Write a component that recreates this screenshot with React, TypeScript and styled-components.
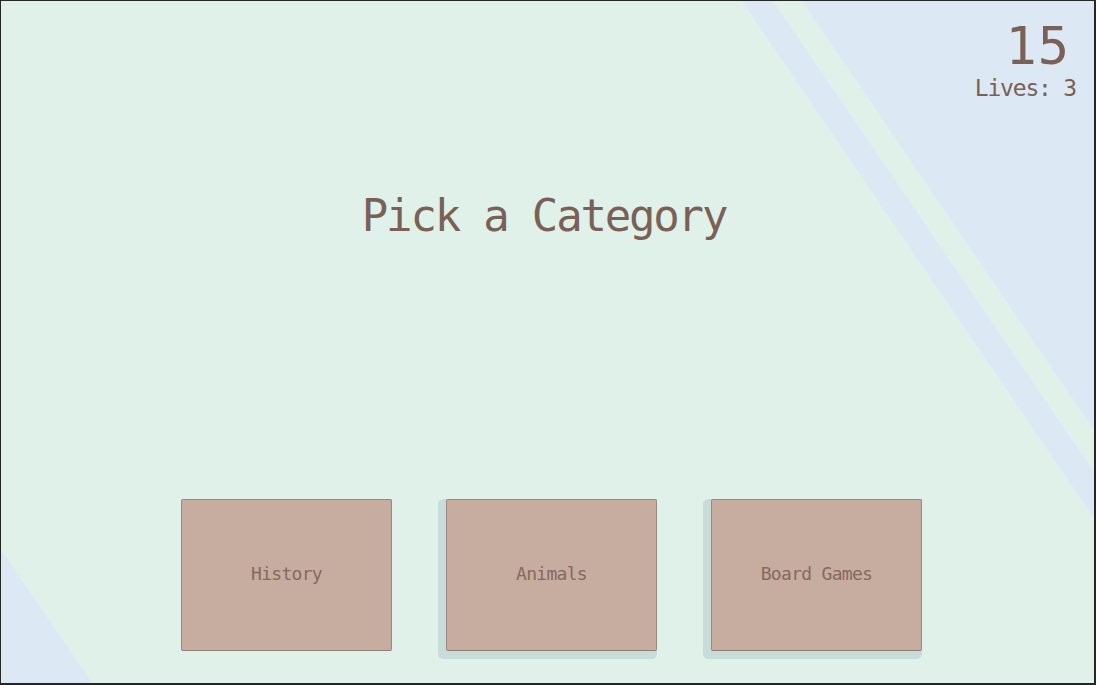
import React from "react";
import styled, { createGlobalStyle } from "styled-components";

const GlobalStyle = createGlobalStyle`
  html, body {
    margin: 0;
    padding: 0;
    background: #262626;
  }
  #root {
    padding: 1px 2px 2px 1px;
  }
`;

const Screen = styled.div`
  position: relative;
  width: 1093px;
  height: 682px;
  background: #e0f1ea;
  overflow: hidden;
  font-family: "DejaVu Sans Mono", "Liberation Mono", monospace;
  color: #7b6155;
`;

const Backdrop = styled.svg`
  position: absolute;
  inset: 0;
  width: 100%;
  height: 100%;
  pointer-events: none;
`;

const Content = styled.div`
  position: relative;
  height: 100%;
  display: flex;
  flex-direction: column;
  box-sizing: border-box;
  padding-bottom: 32px;
`;

const Hud = styled.div`
  display: flex;
  flex-direction: column;
  align-items: flex-end;
  padding: 19px 18px 0 0;
`;

const Score = styled.div`
  font-size: 52px;
  line-height: 1;
  margin-right: 6px;
  letter-spacing: 1px;
`;

const Lives = styled.div`
  font-size: 23px;
  line-height: 1;
  margin-top: 5px;
  letter-spacing: -1.2px;
`;

const Title = styled.h1`
  margin: 94px 0 0;
  padding-right: 7px;
  text-align: center;
  font-size: 44px;
  font-weight: normal;
  line-height: 1;
  letter-spacing: -2.2px;
`;

const CardRow = styled.div`
  margin-top: auto;
  display: flex;
  justify-content: center;
  gap: 54px;
  padding-left: 8px;
`;

const Card = styled.button<{ $raised: boolean }>`
  width: 211px;
  height: 152px;
  box-sizing: border-box;
  background: #c6ada0;
  border: 1px solid #988a82;
  border-bottom-color: #8f7f77;
  border-radius: 2px;
  box-shadow: ${(p) => (p.$raised ? "-4px 4px 0 4px #c8dcda" : "none")};
  font-family: "DejaVu Sans Mono", "Liberation Mono", monospace;
  font-size: 18px;
  letter-spacing: -0.7px;
  color: #86695d;
  display: flex;
  align-items: center;
  justify-content: center;
  padding: 0 0 3px;
  cursor: pointer;
`;

const categories = [
  { name: "History", raised: false },
  { name: "Animals", raised: true },
  { name: "Board Games", raised: true },
];

export default function App() {
  return (
    <>
      <GlobalStyle />
      <Screen>
        <Backdrop viewBox="0 0 1093 682" preserveAspectRatio="none">
          <polygon points="741,0 772,0 1093,471 1093,517" fill="#dce8f4" />
          <polygon points="801,0 1093,0 1093,429" fill="#dce8f4" />
          <polygon points="0,549 91,682 0,682" fill="#dce8f4" />
        </Backdrop>
        <Content>
          <Hud>
            <Score>15</Score>
            <Lives>Lives: 3</Lives>
          </Hud>
          <Title>Pick a Category</Title>
          <CardRow>
            {categories.map((c) => (
              <Card key={c.name} $raised={c.raised}>
                {c.name}
              </Card>
            ))}
          </CardRow>
        </Content>
      </Screen>
    </>
  );
}
